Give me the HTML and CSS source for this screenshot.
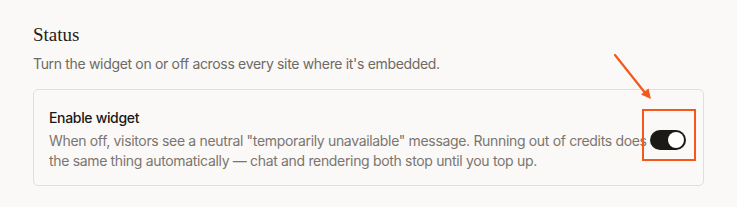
FILE: index.html
```html
<!DOCTYPE html>
<html lang="en">
<head>
    <meta charset="UTF-8">
    <meta name="viewport" content="width=device-width, initial-scale=1.0">
    <title>Widget status</title>
    <link rel="stylesheet" href="styles.css">
</head>
<body>
    <section class="settings-section">
        <h2 class="section-title">Status</h2>
        <p class="section-hint">Turn the widget on or off across every site where it's embedded.</p>

        <div class="setting-card">
            <div class="setting-text">
                <div class="setting-label">Enable widget</div>
                <p class="setting-desc">When off, visitors see a neutral "temporarily unavailable" message. Running out of credits does the same thing automatically — chat and rendering both stop until you top up.</p>
            </div>
            <div class="toggle-wrap">
                <button class="toggle on" aria-pressed="true"><span class="knob"></span></button>
                <!-- callout highlight -->
                <span class="callout-box"></span>
            </div>
        </div>
    </section>

    <svg class="callout-arrow" width="50" height="60" viewBox="0 0 50 60">
        <line x1="5" y1="5" x2="36" y2="44" stroke="#f4581c" stroke-width="2.2" stroke-linecap="round"/>
        <polygon points="41,49 31,44.5 38.5,38.5" fill="#f4581c"/>
    </svg>
</body>
</html>
```

FILE: styles.css
```css
body {
    margin: 0;
    background-color: #faf9f7;
    font-family: Inter, "Noto Sans", sans-serif;
    letter-spacing: -0.33px;
    position: relative;
    height: 207px;
    overflow: hidden;
}

.settings-section {
    padding: 22px 33px 0 33px;
}

.section-title {
    font-family: "Liberation Serif", "DejaVu Serif", serif;
    font-weight: normal;
    font-size: 19px;
    letter-spacing: 0;
    color: #1f1d1a;
    margin: 0;
    line-height: 26px;
}

.section-hint {
    margin: 6px 0 0 0;
    font-size: 14px;
    line-height: 20px;
    color: #6e6a65;
}

.setting-card {
    margin-top: 15px;
    width: 671px;
    box-sizing: border-box;
    border: 1px solid #e2dfda;
    border-radius: 5px;
    padding: 18px 17px 15px 15px;
    display: flex;
    align-items: center;
}

.setting-text {
    flex: 1;
}

.setting-label {
    font-size: 14px;
    font-weight: 500;
    color: #1a1917;
    line-height: 20px;
}

.setting-desc {
    margin: 3px 0 0 0;
    font-size: 14px;
    line-height: 19.5px;
    color: #7a756f;
}

.toggle-wrap {
    position: relative;
    margin-top: 1px;
}

.toggle {
    display: block;
    width: 36px;
    height: 20px;
    border: none;
    border-radius: 10px;
    padding: 0;
    background-color: #1c1a17;
    position: relative;
    cursor: pointer;
}

.knob {
    position: absolute;
    top: 2px;
    right: 2px;
    width: 16px;
    height: 16px;
    border-radius: 50%;
    background-color: #fff;
    box-shadow: 0 1px 2px rgba(0, 0, 0, 0.25);
}

.callout-box {
    position: absolute;
    left: -8px;
    top: -21px;
    width: 50px;
    height: 48px;
    border: 2px solid #f4581c;
}

.callout-arrow {
    position: absolute;
    left: 610px;
    top: 50px;
}
```
